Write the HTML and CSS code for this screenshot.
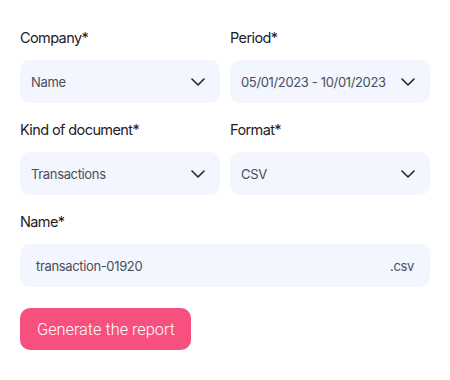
FILE: index.html
```html
<!DOCTYPE html>
<html>
    <head>
        <link rel="stylesheet" href="styles.css">
    </head>
    <body>
        <form class="report">
            <div class="grid">
                <div class="field">
                    <label class="label">Company*</label>
                    <div class="select">
                        <span>Name</span>
                        <svg class="chev" width="14" height="8" viewBox="0 0 14 8"><path d="M1 1l6 6 6-6" fill="none" stroke="#24272e" stroke-width="1.6" stroke-linecap="round" stroke-linejoin="round"/></svg>
                    </div>
                </div>
                <div class="field">
                    <label class="label">Period*</label>
                    <div class="select">
                        <span>05/01/2023 - 10/01/2023</span>
                        <svg class="chev" width="14" height="8" viewBox="0 0 14 8"><path d="M1 1l6 6 6-6" fill="none" stroke="#24272e" stroke-width="1.6" stroke-linecap="round" stroke-linejoin="round"/></svg>
                    </div>
                </div>
                <div class="field">
                    <label class="label">Kind of document*</label>
                    <div class="select">
                        <span>Transactions</span>
                        <svg class="chev" width="14" height="8" viewBox="0 0 14 8"><path d="M1 1l6 6 6-6" fill="none" stroke="#24272e" stroke-width="1.6" stroke-linecap="round" stroke-linejoin="round"/></svg>
                    </div>
                </div>
                <div class="field">
                    <label class="label">Format*</label>
                    <div class="select">
                        <span>CSV</span>
                        <svg class="chev" width="14" height="8" viewBox="0 0 14 8"><path d="M1 1l6 6 6-6" fill="none" stroke="#24272e" stroke-width="1.6" stroke-linecap="round" stroke-linejoin="round"/></svg>
                    </div>
                </div>
                <div class="field wide">
                    <label class="label">Name*</label>
                    <div class="select name">
                        <span>transaction-01920</span>
                        <span>.csv</span>
                    </div>
                </div>
            </div>
            <button class="btn" type="button">Generate the report</button>
        </form>
    </body>
</html>
```

FILE: styles.css
```css
body{
    margin:0;
    background:#fff;
    font-family:Inter, "Liberation Sans", sans-serif;
}

.report{
    padding:28px 20px;
}

.grid{
    display:grid;
    grid-template-columns:200px 200px;
    column-gap:10px;
    row-gap:17px;
}

.field{
    display:flex;
    flex-direction:column;
}

.wide{
    grid-column:1 / 3;
}

.label{
    font-size:14.5px;
    line-height:20px;
    color:#1e2026;
    letter-spacing:-0.6px;
    margin-bottom:12px;
}

.select{
    height:43px;
    box-sizing:border-box;
    background:#f3f6fe;
    border-radius:10px;
    display:flex;
    align-items:center;
    justify-content:space-between;
    padding:0 15px 0 11px;
    font-size:13px;
    color:#4a4e59;
    letter-spacing:-0.35px;
}

.name{
    padding:0 16px 0 16px;
}

.chev{
    display:block;
}

.btn{
    margin-top:21px;
    height:42px;
    padding:0 16px 0 17px;
    border:none;
    border-radius:10px;
    background:#f7507f;
    color:#fff;
    font-family:Roboto, "Liberation Sans", sans-serif;
    font-weight:300;
    font-size:16.3px;
}
```
